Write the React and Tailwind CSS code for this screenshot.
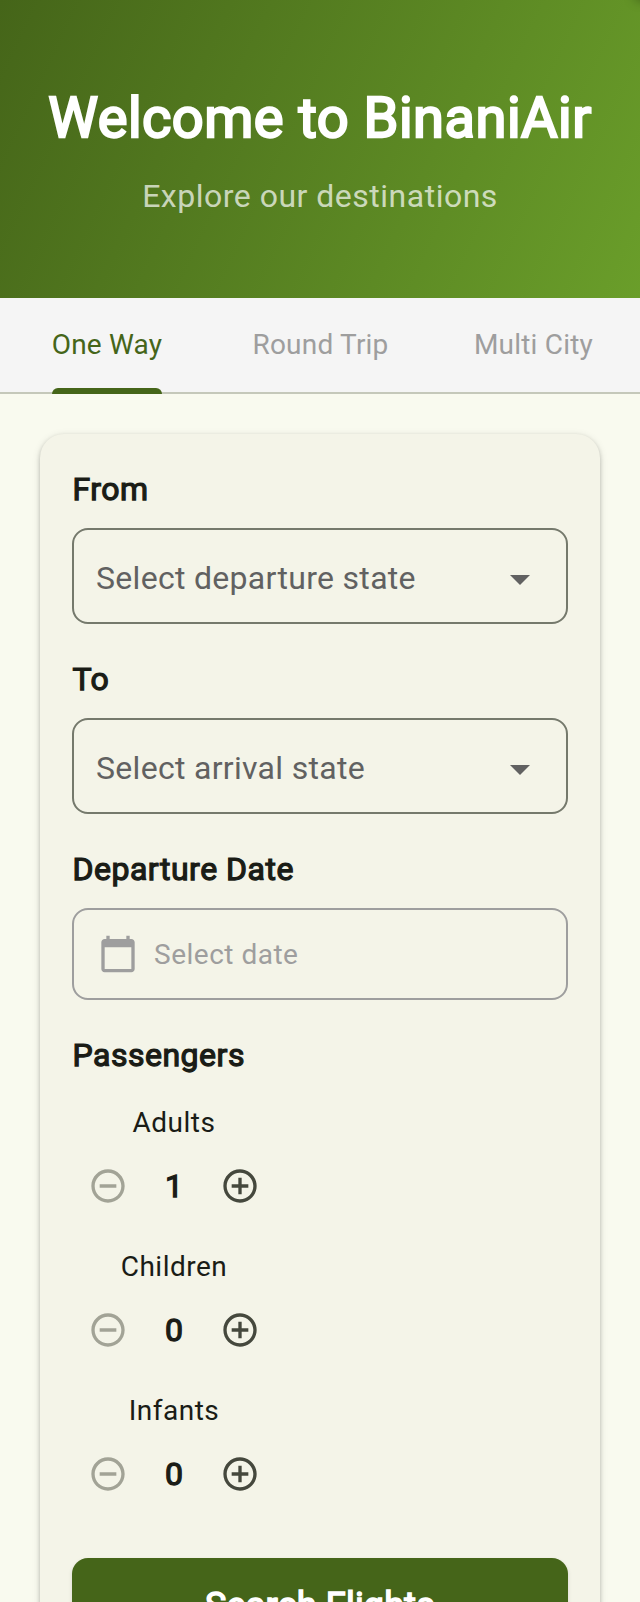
import React from "react";

function Label({ children }) {
  return (
    <div className="h-[48px] whitespace-nowrap pl-[0.5px] text-[32px] leading-[48px] tracking-[0.5px] text-[#1a1c16] [-webkit-text-stroke:1.25px_#1a1c16]">
      {children}
    </div>
  );
}

function SelectField({ placeholder }) {
  return (
    <div className="mt-[15px] flex h-[96px] items-start justify-between rounded-[16px] border-2 border-[#75796c] px-[22px]">
      <span className="pt-[24px] text-[32px] leading-[48px] tracking-[0.3px] text-[#616161]">{placeholder}</span>
      <svg className="mt-[25px] h-[48px] w-[48px]" viewBox="0 0 24 24" fill="#616161">
        <path d="M7 10l5 5 5-5z" />
      </svg>
    </div>
  );
}

function Counter({ label, value }) {
  return (
    <div className="flex h-[144px] w-[204px] flex-col items-center">
      <div className="h-[40px] pt-px text-[28px] leading-[40px] tracking-[0.5px] text-[#1a1c16]">{label}</div>
      <div className="mt-[4px] flex h-[80px] items-center">
        <svg className="h-[40px] w-[40px]" viewBox="0 0 24 24" fill="#a2a396">
          <path d="M7 11v2h10v-2H7zm5-9C6.48 2 2 6.48 2 12s4.48 10 10 10 10-4.48 10-10S17.52 2 12 2zm0 18c-4.41 0-8-3.59-8-8s3.59-8 8-8 8 3.59 8 8-3.59 8-8 8z" />
        </svg>
        <span className="w-[92px] text-center text-[32px] leading-[48px] text-[#1a1c16] [-webkit-text-stroke:1.3px_#1a1c16]">
          {value}
        </span>
        <svg className="h-[40px] w-[40px]" viewBox="0 0 24 24" fill="#45483d">
          <path d="M13 7h-2v4H7v2h4v4h2v-4h4v-2h-4V7zm-1-5C6.48 2 2 6.48 2 12s4.48 10 10 10 10-4.48 10-10S17.52 2 12 2zm0 18c-4.41 0-8-3.59-8-8s3.59-8 8-8 8 3.59 8 8-3.59 8-8 8z" />
        </svg>
      </div>
    </div>
  );
}

export default function App() {
  return (
    <div className="flex h-[1602px] w-[640px] flex-col overflow-hidden bg-[#f9faef] font-['Roboto',sans-serif]">
      <header className="relative flex h-[298px] shrink-0 flex-col items-center overflow-hidden bg-[linear-gradient(115deg,#456519,#6a9e2a)] pt-[80px] text-white">
        <div className="absolute -top-[20px] left-[636px] h-[20px] w-[40px] shadow-[0_0_12px_rgba(0,0,0,0.4)]" />
        <h1 className="h-[76px] whitespace-nowrap text-[56px] leading-[76px] tracking-[0.5px] [-webkit-text-stroke:2.33px_white]">
          Welcome to BinaniAir
        </h1>
        <p className="mt-[16px] h-[48px] text-[32px] leading-[48px] tracking-[0.5px] text-white/70">
          Explore our destinations
        </p>
      </header>
      <nav className="flex h-[96px] shrink-0 border-b-2 border-[#c5c8ba] bg-[#f5f5f5] text-[28px] leading-[40px] tracking-[0.2px] text-[#9e9e9e]">
        <div className="flex w-[214px] justify-center">
          <div className="relative pt-[27px] text-[#456519]">
            One Way
            <div className="absolute bottom-[-2px] left-0 h-[6px] w-full rounded-t-[6px] bg-[#456519]" />
          </div>
        </div>
        <div className="flex w-[213px] justify-center pt-[27px]">Round Trip</div>
        <div className="flex w-[213px] justify-center pt-[27px]">Multi City</div>
      </nav>
      <main className="mx-[40px] mt-[40px] h-[1400px] shrink-0 rounded-[24px] bg-[#f4f4e8] px-[32px] pt-[31px] shadow-[0_2px_4px_rgba(0,0,0,0.2),0_2px_9px_rgba(0,0,0,0.12)]">
        <Label>From</Label>
        <SelectField placeholder="Select departure state" />
        <div className="h-[31px]" />
        <Label>To</Label>
        <SelectField placeholder="Select arrival state" />
        <div className="h-[31px]" />
        <Label>Departure Date</Label>
        <div className="mt-[15px] flex h-[92px] items-center rounded-[16px] border-2 border-[#9e9e9e] pl-[24px]">
          <svg className="h-[40px] w-[40px]" viewBox="0 0 24 24" fill="#9e9e9e">
            <path d="M20 3h-1V1h-2v2H7V1H5v2H4c-1.1 0-2 .9-2 2v16c0 1.1.9 2 2 2h16c1.1 0 2-.9 2-2V5c0-1.1-.9-2-2-2zm0 18H4V8h16v13z" />
          </svg>
          <span className="ml-[16px] pt-[2px] text-[28px] leading-[40px] tracking-[0.5px] text-[#9e9e9e]">Select date</span>
        </div>
        <div className="h-[31px]" />
        <Label>Passengers</Label>
        <div className="h-[23px]" />
        <Counter label="Adults" value="1" />
        <Counter label="Children" value="0" />
        <Counter label="Infants" value="0" />
        <button className="mt-[24px] block h-[96px] w-full rounded-[16px] bg-[#456519] text-[36px] leading-[96px] tracking-[0.2px] text-white shadow-[0_2px_4px_rgba(0,0,0,0.12)] [-webkit-text-stroke:1.5px_white]">
          Search Flights
        </button>
      </main>
    </div>
  );
}
